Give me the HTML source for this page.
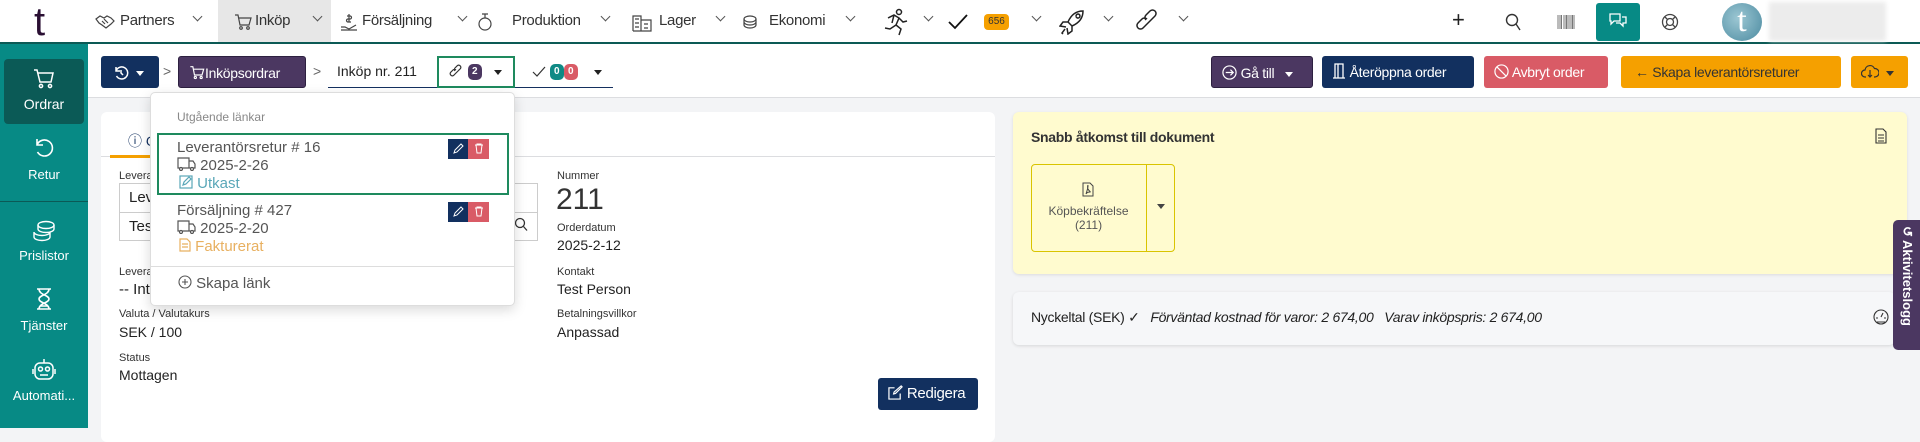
<!DOCTYPE html>
<html><head><meta charset="utf-8"><style>
*{box-sizing:border-box;margin:0;padding:0}
body{width:1920px;height:428px;overflow:hidden;background:#f3f4f6;font-family:"Liberation Sans",sans-serif;position:relative;color:#222}
.a{position:absolute}
#top{left:0;top:0;width:1920px;height:44px;background:#fff;border-bottom:2px solid #0c5a55}
.mi{position:absolute;top:12px;font-size:15px;color:#333;white-space:nowrap;letter-spacing:-0.3px}
.chev{position:absolute;top:13px;width:9px;height:9px;}
.chev:before{content:"";position:absolute;left:1px;top:0;width:6px;height:6px;border-right:1.2px solid #555;border-bottom:1.2px solid #555;transform:rotate(45deg)}
#side{left:0;top:44px;width:88px;height:384px;background:#078a85}
.si{position:absolute;left:0;width:88px;text-align:center;color:#fff;font-size:13px}
#tool{left:88px;top:44px;width:1832px;height:54px;background:#fff;border-bottom:1px solid #dcdde0}
.btn{position:absolute;top:56px;height:32px;border-radius:3px;color:#fff;font-size:14px;line-height:32px;white-space:nowrap;letter-spacing:-0.3px}
.caret{display:inline-block;width:0;height:0;border-left:4px solid transparent;border-right:4px solid transparent;border-top:5px solid currentColor;vertical-align:middle}
.lbl{position:absolute;font-size:11px;color:#333}
.val{position:absolute;font-size:14px;color:#222}
.badge{display:inline-block;border-radius:5px;color:#fff;font-size:10px;font-weight:bold;height:16px;line-height:16px;padding:0 4px;vertical-align:middle}
</style></head><body>
<div id="top" class="a">
 <div class="a" style="left:34px;top:2px;font-size:40px;color:#2a0f33;font-family:'Liberation Sans';line-height:40px">t</div>
 <div class="a" style="left:218px;top:0;width:113px;height:42px;background:#e7e7e7"></div>
 <svg class="a" style="left:95px;top:14px" width="20" height="16" viewBox="0 0 20 16" fill="none" stroke="#444" stroke-width="1.2"><path d="M1 5l4-3 4 2 3-2 4 2 3 3-3 3-5 4-4-3-3-2z"/><path d="M7 7l3 3M9 5l4 4"/></svg>
 <div class="mi" style="left:120px">Partners</div><div class="chev" style="left:193px"></div>
 <svg class="a" style="left:234px;top:13px" width="18" height="18" viewBox="0 0 18 18" fill="none" stroke="#444" stroke-width="1.2"><path d="M1 2h3l2 10h9l2-7H5"/><circle cx="7" cy="15" r="1.3"/><circle cx="14" cy="15" r="1.3"/></svg>
 <div class="mi" style="left:255px">Inköp</div><div class="chev" style="left:313px"></div>
 <svg class="a" style="left:340px;top:12px" width="18" height="20" viewBox="0 0 18 20" fill="none" stroke="#444" stroke-width="1.2"><path d="M1 15h4l4 2 7-4M1 18h16M9 2v8M7 4h3a1.5 1.5 0 010 3H8a1.5 1.5 0 000 3h3"/></svg>
 <div class="mi" style="left:362px">Försäljning</div><div class="chev" style="left:458px"></div>
 <svg class="a" style="left:477px;top:12px" width="16" height="20" viewBox="0 0 16 20" fill="none" stroke="#444" stroke-width="1.2"><circle cx="8" cy="12" r="6"/><path d="M8 6V2M5 2h6"/></svg>
 <div class="mi" style="left:512px">Produktion</div><div class="chev" style="left:601px"></div>
 <svg class="a" style="left:632px;top:12px" width="20" height="20" viewBox="0 0 20 20" fill="none" stroke="#444" stroke-width="1.2"><path d="M1 19V4h8v15M9 8h10v11H1M3 7h4M3 11h4M3 15h4M12 12h4M12 16h4"/></svg>
 <div class="mi" style="left:659px">Lager</div><div class="chev" style="left:716px"></div>
 <svg class="a" style="left:742px;top:14px" width="16" height="16" viewBox="0 0 16 16" fill="none" stroke="#444" stroke-width="1.2"><ellipse cx="8" cy="5" rx="6" ry="3"/><path d="M2 5v6c0 1.6 2.7 3 6 3s6-1.4 6-3V5M2 8c0 1.6 2.7 3 6 3s6-1.4 6-3"/></svg>
 <div class="mi" style="left:769px">Ekonomi</div><div class="chev" style="left:846px"></div>
 <svg class="a" style="left:882px;top:8px" width="27" height="28" viewBox="0 0 27 28" fill="none" stroke="#222" stroke-width="1.5"><circle cx="17" cy="4" r="2.5"/><path d="M6 10l6-3 5 3-3 7 5 4-2 6M14 17l-6 4-5-1M17 10l4 4 4-1M12 7l-2 8"/></svg>
 <div class="chev" style="left:924px"></div>
 <svg class="a" style="left:948px;top:14px" width="20" height="16" viewBox="0 0 20 16" fill="none" stroke="#111" stroke-width="1.8"><path d="M1 8l6 6L19 1"/></svg>
 <div class="a" style="left:984px;top:14px;width:25px;height:16px;background:#f5a000;border-radius:4px;font-size:10px;line-height:16px;text-align:center;color:#333">656</div>
 <div class="chev" style="left:1032px"></div>
 <svg class="a" style="left:1059px;top:9px" width="26" height="26" viewBox="0 0 26 26" fill="none" stroke="#222" stroke-width="1.5"><path d="M24 2c-7 0-12 4-15 11l4 4c7-3 11-8 11-15zM9 13l-5 0-3 4 6 1M13 17v5l-4 3-1-6M6 20l-3 4 1 1M17 7a2 2 0 110 .1"/></svg>
 <div class="chev" style="left:1104px"></div>
 <svg class="a" style="left:1136px;top:9px" width="26" height="26" viewBox="0 0 26 26" fill="none" stroke="#222" stroke-width="1.5"><path d="M11 15l-4 4a3.5 3.5 0 01-5-5l4-4a3.5 3.5 0 015 0M15 11l4-4a3.5 3.5 0 00-5-5l-4 4a3.5 3.5 0 000 5M9 17l8-8"/></svg>
 <div class="chev" style="left:1179px"></div>
 <div class="a" style="left:1452px;top:7px;font-size:22px;color:#222">+</div>
 <svg class="a" style="left:1505px;top:13px" width="16" height="18" viewBox="0 0 16 18" fill="none" stroke="#333" stroke-width="1.4"><circle cx="7" cy="7" r="5.5"/><path d="M11 11l4 6"/></svg>
 <svg class="a" style="left:1557px;top:15px" width="18" height="14" viewBox="0 0 18 14"><path d="M1 0v14M3 0v14M4.5 0v14M7 0v14M9 0v14M10 0v14M12 0v14M14 0v14M15.5 0v14M17 0v14" stroke="#777" stroke-width="1"/></svg>
 <div class="a" style="left:1596px;top:3px;width:44px;height:38px;background:#078a85;border-radius:3px"></div>
 <svg class="a" style="left:1608px;top:12px" width="20" height="20" viewBox="0 0 20 20" fill="none" stroke="#fff" stroke-width="1.3"><path d="M2 2h10v7H6l-3 3V9H2zM8 11h4l3 3v-3h3V5h-4"/></svg>
 <svg class="a" style="left:1661px;top:13px" width="18" height="18" viewBox="0 0 18 18" fill="none" stroke="#444" stroke-width="1.3"><circle cx="9" cy="9" r="7.5"/><circle cx="9" cy="9" r="3.5"/><path d="M4 4l2.5 2.5M14 4l-2.5 2.5M4 14l2.5-2.5M14 14l-2.5-2.5"/></svg>
 <div class="a" style="left:1722px;top:3px;width:40px;height:38px;border-radius:50%;background:radial-gradient(circle at 40% 40%,#9cc7d3,#4b8aa0);color:#fff;font-size:34px;line-height:36px;text-align:center;font-family:'Liberation Serif'">t</div>
 <div class="a" style="left:1769px;top:2px;width:117px;height:39px;background:#ececec;filter:blur(2px)"></div>
</div>

<div id="side" class="a">
 <div class="a" style="left:4px;top:15px;width:80px;height:65px;background:#0b5a56;border-radius:4px"></div>
 <svg class="a" style="left:33px;top:24px" width="22" height="22" viewBox="0 0 22 22" fill="none" stroke="#fff" stroke-width="1.5"><path d="M1 2h3l3 12h11l2-9H5"/><circle cx="8" cy="18" r="1.6"/><circle cx="17" cy="18" r="1.6"/></svg>
 <div class="si" style="top:52px;font-size:14px">Ordrar</div>
 <svg class="a" style="left:33px;top:93px" width="22" height="22" viewBox="0 0 22 22" fill="none" stroke="#fff" stroke-width="1.6"><path d="M4 8a8 8 0 11.5 7M4 2v6h6"/></svg>
 <div class="si" style="top:123px">Retur</div>
 <div class="a" style="left:0;top:157px;width:88px;height:1px;background:#0b5a56"></div>
 <svg class="a" style="left:32px;top:176px" width="24" height="22" viewBox="0 0 24 22" fill="none" stroke="#fff" stroke-width="1.4"><ellipse cx="14" cy="5" rx="8" ry="3.5"/><path d="M6 5v4c0 2 3.6 3.5 8 3.5S22 11 22 9V5M2 12c0 2 3.6 3.5 8 3.5s8-1.5 8-3.5M2 12v5c0 2 3.6 3.5 8 3.5s8-1.5 8-3.5v-5"/></svg>
 <div class="si" style="top:204px">Prislistor</div>
 <svg class="a" style="left:35px;top:244px" width="18" height="22" viewBox="0 0 18 22" fill="none" stroke="#fff" stroke-width="1.6"><path d="M2 1h14M2 21h14M4 1c0 6 10 6 10 10S4 15 4 21M14 1c0 6-10 6-10 10s10 4 10 10M5 18h8"/></svg>
 <div class="si" style="top:274px">Tjänster</div>
 <svg class="a" style="left:31px;top:313px" width="26" height="24" viewBox="0 0 26 24" fill="none" stroke="#fff" stroke-width="1.5"><rect x="4" y="6" width="18" height="16" rx="5"/><path d="M13 6V2M2 12v5M24 12v5M9 18h8"/><circle cx="9.5" cy="12" r="2"/><circle cx="16.5" cy="12" r="2"/></svg>
 <div class="si" style="top:344px">Automati...</div>
</div>

<div id="tool" class="a"></div>
<div class="btn" style="left:101px;width:58px;background:#12305f;padding-left:12px"><svg width="16" height="16" viewBox="0 0 16 16" fill="none" stroke="#fff" stroke-width="1.5" style="vertical-align:middle"><path d="M3 6a6 6 0 11.5 5M3 2v4h4M8 5v3l2 2"/></svg>&nbsp;&nbsp;<span class="caret"></span></div>
<div class="a" style="left:163px;top:63px;font-size:14px;color:#666">&gt;</div>
<div class="btn" style="left:178px;width:128px;background:#4b3761;padding-left:10px;border:1px solid #2d2040"><svg width="16" height="15" viewBox="0 0 18 18" fill="none" stroke="#fff" stroke-width="1.4" style="vertical-align:-2px"><path d="M1 2h3l2 10h9l2-7H5"/><circle cx="7" cy="15" r="1.3"/><circle cx="14" cy="15" r="1.3"/></svg>Inköpsordrar</div>
<div class="a" style="left:313px;top:63px;font-size:14px;color:#666">&gt;</div>
<div class="a" style="left:337px;top:63px;font-size:14px;color:#222">Inköp nr. 211</div>
<div class="a" style="left:328px;top:87px;width:285px;height:1px;background:#14305f"></div>
<div class="a" style="left:437px;top:56px;width:78px;height:32px;border:2px solid #1e8a5e;background:#fff"></div>
<svg class="a" style="left:449px;top:64px" width="16" height="16" viewBox="0 0 16 16" fill="none" stroke="#333" stroke-width="1.2"><path d="M7 9l-2.5 2.5a2.2 2.2 0 01-3-3L4 6a2.2 2.2 0 013 0M9 7l2.5-2.5a2.2 2.2 0 00-3-3L6 4a2.2 2.2 0 000 3M6 10l4-4"/></svg>
<div class="a" style="left:468px;top:63px"><span class="badge" style="background:#4b3761">2</span></div>
<div class="a" style="left:494px;top:64px;color:#222"><span class="caret"></span></div>
<svg class="a" style="left:532px;top:66px" width="14" height="11" viewBox="0 0 14 11" fill="none" stroke="#333" stroke-width="1.2"><path d="M1 6l4 4 8-9"/></svg>
<div class="a" style="left:550px;top:63px"><span class="badge" style="background:#0f8a85">0</span> <span class="badge" style="background:#d95b66;margin-left:-4px">0</span></div>
<div class="a" style="left:594px;top:64px;color:#222"><span class="caret"></span></div>

<div class="btn" style="left:1211px;width:102px;background:#4b3761;border:1px solid #2d2040;padding-left:10px"><svg width="15" height="15" viewBox="0 0 16 16" fill="none" stroke="#fff" stroke-width="1.3" style="vertical-align:-2px"><circle cx="8" cy="8" r="7"/><path d="M4 8h8M9 5l3 3-3 3"/></svg> Gå till&nbsp;&nbsp;&nbsp;<span class="caret"></span></div>
<div class="btn" style="left:1322px;width:152px;background:#12305f;padding-left:10px"><svg width="14" height="16" viewBox="0 0 14 16" fill="none" stroke="#fff" stroke-width="1.3" style="vertical-align:-2px"><path d="M1 15h12M3 15V1h8v14M6 1v14"/></svg> Återöppna order</div>
<div class="btn" style="left:1484px;width:124px;background:#d95b66;padding-left:10px"><svg width="15" height="15" viewBox="0 0 16 16" fill="none" stroke="#fff" stroke-width="1.3" style="vertical-align:-2px"><circle cx="8" cy="8" r="7"/><path d="M3 3l10 10"/></svg> Avbryt order</div>
<div class="btn" style="left:1621px;width:220px;background:#f5a000;color:#333;padding-left:14px">←&nbsp;Skapa leverantörsreturer</div>
<div class="btn" style="left:1851px;width:57px;background:#f5a000;color:#333;padding-left:10px"><svg width="18" height="16" viewBox="0 0 18 16" fill="none" stroke="#333" stroke-width="1.2" style="vertical-align:-2px"><path d="M5 14H4a3.5 3.5 0 010-7 5 5 0 019.5-1.5A3.5 3.5 0 0114 14h-1M9 7v7M7 12l2 2 2-2"/></svg>&nbsp;&nbsp;<span class="caret"></span></div>

<!-- left card -->
<div class="a" style="left:101px;top:112px;width:894px;height:330px;background:#fff;border-radius:6px"></div>
<div class="a" style="left:101px;top:156px;width:894px;height:1px;background:#dcdde0"></div>
<div class="a" style="left:110px;top:155px;width:60px;height:3px;background:#f5a000"></div>
<div class="a" style="left:128px;top:131px;font-size:14px;color:#12305f">ⓘ O</div>
<div class="lbl" style="left:119px;top:170px">Leverantör</div>
<div class="a" style="left:119px;top:183px;width:419px;height:58px;border:1px solid #ccc"></div>
<div class="a" style="left:119px;top:212px;width:419px;height:1px;background:#ccc"></div>
<div class="val" style="left:129px;top:189px;font-size:15px">Leverantör</div>
<div class="val" style="left:129px;top:218px;font-size:15px">Test</div>
<svg class="a" style="left:514px;top:217px" width="14" height="15" viewBox="0 0 14 15" fill="none" stroke="#333" stroke-width="1.3"><circle cx="6" cy="6" r="4.5"/><path d="M9.5 9.5l3.5 4"/></svg>
<div class="lbl" style="left:119px;top:266px">Leverans</div>
<div class="val" style="left:119px;top:281px;font-size:15px">-- Intern</div>
<div class="lbl" style="left:119px;top:308px">Valuta / Valutakurs</div>
<div class="val" style="left:119px;top:324px">SEK / 100</div>
<div class="lbl" style="left:119px;top:352px">Status</div>
<div class="val" style="left:119px;top:367px">Mottagen</div>
<div class="lbl" style="left:557px;top:170px">Nummer</div>
<div class="val" style="left:556px;top:183px;font-size:30px;color:#333">211</div>
<div class="lbl" style="left:557px;top:222px">Orderdatum</div>
<div class="val" style="left:557px;top:237px">2025-2-12</div>
<div class="lbl" style="left:557px;top:266px">Kontakt</div>
<div class="val" style="left:557px;top:281px">Test Person</div>
<div class="lbl" style="left:557px;top:308px">Betalningsvillkor</div>
<div class="val" style="left:557px;top:324px">Anpassad</div>
<div class="btn" style="left:878px;top:378px;width:100px;background:#12305f;padding-left:10px;font-size:15px"><svg width="15" height="15" viewBox="0 0 16 16" fill="none" stroke="#fff" stroke-width="1.3" style="vertical-align:-2px"><path d="M13 9v6H1V3h6M14 1l1 1-7 7-2 .5.5-2z"/></svg> Redigera</div>

<!-- dropdown -->
<div class="a" style="left:150px;top:92px;width:365px;height:214px;background:#fff;border:1px solid #ddd;border-radius:5px;box-shadow:0 4px 12px rgba(0,0,0,.15)"></div>
<div class="a" style="left:177px;top:110px;font-size:12px;color:#888">Utgående länkar</div>
<div class="a" style="left:157px;top:133px;width:352px;height:62px;border:2px solid #1e8a5e"></div>
<div class="a" style="left:177px;top:139px;font-size:15px;color:#555">Leverantörsretur # 16</div>
<div class="a" style="left:177px;top:157px;font-size:15px;color:#555"><svg width="19" height="14" viewBox="0 0 19 14" fill="none" stroke="#555" stroke-width="1.2" style="vertical-align:-1px"><path d="M1 1h11v10H1zM12 4h4l2 3v4h-6"/><circle cx="4" cy="12" r="1.5" fill="#fff"/><circle cx="15" cy="12" r="1.5" fill="#fff"/></svg> 2025-2-26</div>
<div class="a" style="left:179px;top:175px;font-size:15px;color:#5aa7b8"><svg width="14" height="14" viewBox="0 0 14 14" fill="none" stroke="#5aa7b8" stroke-width="1.2" style="vertical-align:-1px"><rect x="1" y="1" width="12" height="12"/><path d="M4 10l1-3 5-5 2 2-5 5z"/></svg> Utkast</div>
<div class="a" style="left:448px;top:139px;width:20px;height:20px;background:#12305f"></div>
<div class="a" style="left:468px;top:139px;width:21px;height:20px;background:#d95b66"></div>
<div class="a" style="left:448px;top:202px;width:20px;height:20px;background:#12305f"></div>
<div class="a" style="left:468px;top:202px;width:21px;height:20px;background:#d95b66"></div>
<svg class="a" style="left:453px;top:143px" width="11" height="11" viewBox="0 0 11 11" fill="none" stroke="#fff" stroke-width="1"><path d="M1 10l1-3 6-6 2 2-6 6z"/></svg>
<svg class="a" style="left:474px;top:143px" width="10" height="11" viewBox="0 0 10 11" fill="none" stroke="#fff" stroke-width="1"><path d="M1 2h8M3 2V1h4v1M2 2l1 8h4l1-8"/></svg>
<svg class="a" style="left:453px;top:206px" width="11" height="11" viewBox="0 0 11 11" fill="none" stroke="#fff" stroke-width="1"><path d="M1 10l1-3 6-6 2 2-6 6z"/></svg>
<svg class="a" style="left:474px;top:206px" width="10" height="11" viewBox="0 0 10 11" fill="none" stroke="#fff" stroke-width="1"><path d="M1 2h8M3 2V1h4v1M2 2l1 8h4l1-8"/></svg>
<div class="a" style="left:177px;top:202px;font-size:15px;color:#555">Försäljning # 427</div>
<div class="a" style="left:177px;top:220px;font-size:15px;color:#555"><svg width="19" height="14" viewBox="0 0 19 14" fill="none" stroke="#555" stroke-width="1.2" style="vertical-align:-1px"><path d="M1 1h11v10H1zM12 4h4l2 3v4h-6"/><circle cx="4" cy="12" r="1.5" fill="#fff"/><circle cx="15" cy="12" r="1.5" fill="#fff"/></svg> 2025-2-20</div>
<div class="a" style="left:179px;top:238px;font-size:15px;color:#e8b060"><svg width="12" height="14" viewBox="0 0 12 14" fill="none" stroke="#e8b060" stroke-width="1.2" style="vertical-align:-1px"><path d="M1 1h7l3 3v9H1zM3 6h6M3 9h6"/></svg> Fakturerat</div>
<div class="a" style="left:150px;top:266px;width:365px;height:1px;background:#ddd"></div>
<div class="a" style="left:178px;top:275px;font-size:15px;color:#555"><svg width="14" height="14" viewBox="0 0 14 14" fill="none" stroke="#555" stroke-width="1.1" style="vertical-align:-1px"><circle cx="7" cy="7" r="6"/><path d="M7 4v6M4 7h6"/></svg> Skapa länk</div>

<!-- right -->
<div class="a" style="left:1013px;top:112px;width:894px;height:162px;background:#fffbcf;border-radius:6px;box-shadow:0 1px 3px rgba(0,0,0,.1)"></div>
<div class="a" style="left:1031px;top:129px;font-size:14px;font-weight:bold;color:#333;letter-spacing:-0.3px">Snabb åtkomst till dokument</div>
<svg class="a" style="left:1875px;top:128px" width="12" height="16" viewBox="0 0 12 16" fill="none" stroke="#333" stroke-width="1.1"><path d="M1 1h7l3 3v11H1zM3 7h6M3 10h6M3 13h6"/></svg>
<div class="a" style="left:1031px;top:164px;width:144px;height:88px;border:1px solid #d9c400;border-radius:4px"></div>
<div class="a" style="left:1146px;top:164px;width:1px;height:88px;background:#d9c400"></div>
<svg class="a" style="left:1082px;top:182px" width="12" height="15" viewBox="0 0 12 15" fill="none" stroke="#444" stroke-width="1"><path d="M1 1h7l3 3v10H1zM4 12c1-3 2-6 2-8s-1 1 0 3 3 3 2 3-3 0-4 2"/></svg>
<div class="a" style="left:1031px;top:204px;width:115px;text-align:center;font-size:12px;color:#555;line-height:14px">Köpbekräftelse<br>(211)</div>
<div class="a" style="left:1157px;top:204px;color:#444;font-size:0"><span class="caret" style="border-top-width:5px"></span></div>
<div class="a" style="left:1013px;top:292px;width:882px;height:53px;background:#f6f7f9;border-radius:6px;box-shadow:0 1px 3px rgba(0,0,0,.12)"></div>
<div class="a" style="left:1031px;top:309px;font-size:14px;color:#222;white-space:nowrap;letter-spacing:-0.3px">Nyckeltal (SEK) ✓&nbsp;&nbsp; <i>Förväntad kostnad för varor: 2 674,00&nbsp;&nbsp;&nbsp;Varav inköpspris: 2 674,00</i></div>
<svg class="a" style="left:1873px;top:309px" width="16" height="16" viewBox="0 0 16 16" fill="none" stroke="#333" stroke-width="1.1"><circle cx="8" cy="8" r="7"/><path d="M8 8l2-4M3 9h2M11 9h2M4 13h8"/></svg>
<div class="a" style="left:1893px;top:220px;width:27px;height:130px;background:#4b3761;border-radius:5px 0 0 5px"></div>
<div class="a" style="left:1898px;top:226px;width:18px;height:120px;writing-mode:vertical-rl;color:#fff;font-size:13px;font-weight:bold;line-height:18px">↺ Aktivitetslogg</div>
</body></html>
